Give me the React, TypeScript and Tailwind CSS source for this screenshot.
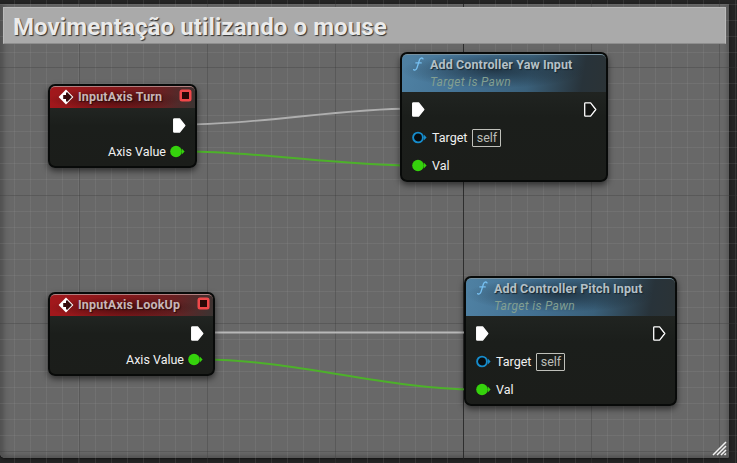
import type { ReactNode } from "react";

const GRID = [
  "repeating-linear-gradient(to right, rgba(25,25,25,0.36) 0 1px, transparent 1px 128px)",
  "repeating-linear-gradient(to bottom, rgba(25,25,25,0.36) 0 1px, transparent 1px 128px)",
  "repeating-linear-gradient(to right, rgba(175,175,175,0.19) 0 1px, transparent 1px 16px)",
  "repeating-linear-gradient(to bottom, rgba(175,175,175,0.19) 0 1px, transparent 1px 16px)",
].join(",");

const GRID_OFFSET = "79px 0, 0 67px, 79px 0, 0 67px";

function ExecPin({ filled = false }: { filled?: boolean }) {
  return (
    <svg width="13" height="15" viewBox="0 0 13 15" className="block shrink-0">
      <path
        d="M1.4 .9H6.6L11.8 7.5 6.6 14.1H1.4Q.7 14.1 .7 13.4V1.6Q.7 .9 1.4 .9Z"
        fill={filled ? "#fff" : "#111311"}
        stroke="#fff"
        strokeWidth="1.3"
        strokeLinejoin="round"
      />
    </svg>
  );
}

function DataPin({ color, filled = false }: { color: string; filled?: boolean }) {
  return (
    <svg width="15" height="13" viewBox="0 0 15 13" className="block shrink-0">
      <circle cx="6" cy="6.5" r={filled ? 5.8 : 4.9} fill={filled ? color : "#080d10"} stroke={color} strokeWidth={filled ? 0 : 1.9} />
      <path d="M11.8 3.5L14.6 6.5 11.8 9.5Z" fill={color} />
    </svg>
  );
}

function EventIcon() {
  return (
    <svg width="16" height="16" viewBox="0 0 16 16" className="block shrink-0">
      <path d="M8 .6L15.4 8 8 15.4 .6 8Z" fill="#fff" />
      <path d="M9 2.9L14 8 9 13.1 8 12.1V10H5.2V6H8V3.9Z" fill="#350b0c" />
    </svg>
  );
}

function FunctionIcon() {
  return (
    <svg width="13" height="16" viewBox="0 0 13 16" className="block shrink-0" fill="none" stroke="#76bff0" strokeLinecap="round">
      <path d="M11 2.9C9.9 1.3 8.2 1.9 7.5 3.8L5.2 11.3C4.4 13.9 3.1 14.6 1.6 13.6" strokeWidth="1.3" />
      <path d="M3.8 6.9H9.3" strokeWidth="1.1" />
    </svg>
  );
}

const SHELL =
  "absolute overflow-hidden rounded-[7px] border-2 border-[#080a09] bg-gradient-to-b from-[#292d2a] via-[#1b1e1b] to-[#1b1d1a] shadow-[0_3px_6px_rgba(0,0,0,0.55)]";

function EventNode({ title, place, tracking }: { title: string; place: string; tracking: string }) {
  return (
    <section className={`${SHELL} ${place} h-[84px]`}>
      <header className="flex h-[22px] items-center rounded-t-[5px] border-t border-[#b08080] bg-[radial-gradient(ellipse_at_45%_60%,rgba(25,5,5,0.55),transparent_60%),linear-gradient(100deg,#a3181c_0%,#86181b_45%,#6a2022_75%,#3a3432_100%)] pl-[8px] pr-[4px]">
        <span className="relative top-[-1px]">
          <EventIcon />
        </span>
        <h2 className={`relative top-[-1px] ml-[4px] whitespace-nowrap text-[12.5px] leading-[22px] font-bold text-[#c8b6b6] [text-shadow:1px_1px_1px_#2b0c0c] ${tracking}`}>{title}</h2>
        <span className="mb-[4px] ml-auto size-[11px] shrink-0 rounded-[2px] border-[2.5px] border-[#f0484a] bg-[#280807] shadow-[0_0_0_0.5px_#f0484a]" />
      </header>
      <div className="flex h-[33px] items-center justify-end pr-[9px] pt-[1px]">
        <ExecPin filled />
      </div>
      <div className="flex h-[21px] items-center justify-end gap-[4px] pr-[10px]">
        <span className="text-[12.5px] leading-5 text-[#f1f1f1]">Axis Value</span>
        <DataPin color="#35d20c" filled />
      </div>
    </section>
  );
}

function Row({ children }: { children: ReactNode }) {
  return <div className="flex h-[28px] items-center gap-[5px]">{children}</div>;
}

function FunctionNode({ title, place }: { title: string; place: string }) {
  return (
    <section className={`${SHELL} ${place} h-[130px]`}>
      <header className="flex h-[38px] rounded-t-[5px] border-t border-[#76909f] bg-[radial-gradient(ellipse_at_45%_42%,rgba(18,28,36,0.62),transparent_58%),linear-gradient(100deg,#4f81a3_0%,#427092_35%,#3a607a_62%,#28333a_88%,#2b3336_100%)] pl-[10px] pt-[1px]">
        <FunctionIcon />
        <div className="ml-[5px] whitespace-nowrap">
          <h2 className="text-[12.5px] leading-[18px] font-bold tracking-[.11px] text-[#b4c0c7] [text-shadow:1px_1px_1px_#172630]">{title}</h2>
          <p className="text-[12px] leading-[16px] italic tracking-[.33px] text-[#829f91]">Target is Pawn</p>
        </div>
      </header>
      <div className="pl-[10px] pr-[9px] pt-[3px]">
        <div className="flex h-[28px] items-center justify-between">
          <ExecPin filled />
          <ExecPin />
        </div>
        <Row>
          <span className="mt-[1px]">
            <DataPin color="#168ccc" />
          </span>
          <span className="mt-[2px] text-[12.5px] text-[#f0f0f0]">Target</span>
          <span className="mt-[2px] flex h-[18px] w-[29px] items-center justify-center rounded-[1px] border border-[#bfc0ba] text-[12.5px] text-[#bcbeb9]">self</span>
        </Row>
        <Row>
          <DataPin color="#35d20c" filled />
          <span className="mt-[2px] text-[12.5px] text-[#f0f0f0]">Val</span>
        </Row>
      </div>
    </section>
  );
}

function Wires() {
  return (
    <svg className="absolute inset-0" width="737" height="463" fill="none">
      <path d="M188 124.5C258 124.5 342 108.5 412 108.5" stroke="#aeaeae" strokeWidth="1.8" />
      <path d="M186 151.5C256 151.5 342 165.5 412 165.5" stroke="#4db12a" strokeWidth="2" />
      <path d="M206 332.5H476" stroke="#b8b8b8" strokeWidth="1.8" />
      <path d="M204 359.5C294 359.5 386 389.5 476 389.5" stroke="#4db12a" strokeWidth="2" />
    </svg>
  );
}

export default function App() {
  return (
    <main className="relative h-[463px] w-[737px] overflow-hidden bg-[#242424] pt-[4px] font-[Roboto,sans-serif]">
      <section className="h-[454px] w-[729px] rounded-br-[2px] rounded-bl-[5px] bg-[#686868] shadow-[inset_4px_0_5px_#505050,inset_-3px_-3px_3px_#5b5b5b,0_1px_3px_#111]" />
      <div className="absolute inset-0 opacity-70" style={{ backgroundImage: GRID, backgroundPosition: GRID_OFFSET }} />
      <div className="absolute top-0 left-[463px] h-full w-px bg-[#1c1c1c]/70" />
      <h1 className="absolute top-[7px] left-[3px] flex h-[37px] w-[723px] items-center border border-[#bababa] border-b-[#8e8e8e] bg-[#aaa] pl-[9px] text-[24px] leading-[36px] font-bold tracking-[.1px] text-[#eaeaea] [text-shadow:1px_1px_1px_#303030]">
        <span className="relative top-[1px] whitespace-nowrap">Movimentação utilizando o mouse</span>
      </h1>
      <Wires />
      <EventNode title="InputAxis Turn" place="left-[48px] top-[84px] w-[149px]" tracking="tracking-[.15px]" />
      <EventNode title="InputAxis LookUp" place="left-[48px] top-[292px] w-[167px]" tracking="tracking-[.18px]" />
      <FunctionNode title="Add Controller Yaw Input" place="left-[400px] top-[52px] w-[208px]" />
      <FunctionNode title="Add Controller Pitch Input" place="left-[464px] top-[276px] w-[213px]" />
      <svg className="absolute top-[441px] left-[712px]" width="15" height="15" stroke="#f1f1f1" strokeWidth="1.5">
        <path d="M1 14L14 1M5 14L14 5M9 14L14 9M12.5 14L14 12.5" />
      </svg>
    </main>
  );
}
